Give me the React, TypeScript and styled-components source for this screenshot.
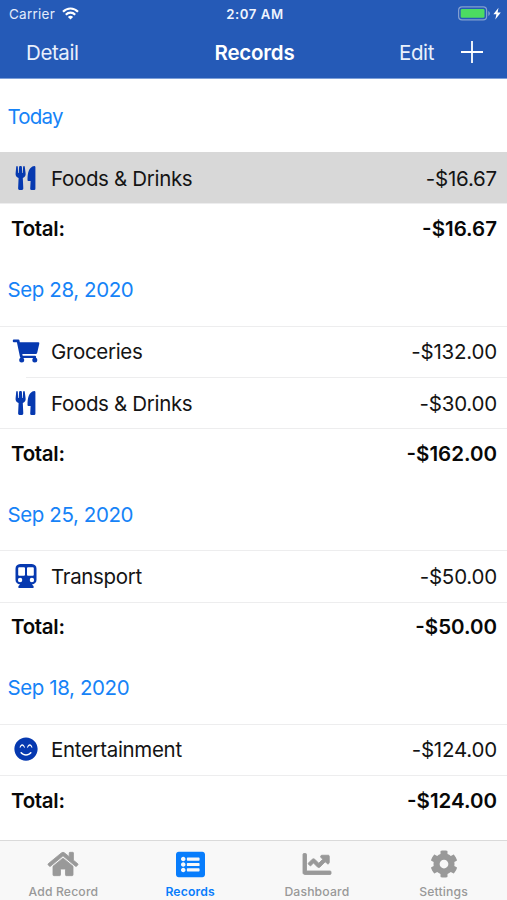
import React from "react";
import styled, { createGlobalStyle } from "styled-components";
import { FaSmileBeam, FaHome, FaListAlt, FaChartLine, FaCog } from "react-icons/fa";

const GlobalStyle = createGlobalStyle`
  * { box-sizing: border-box; }
  body {
    margin: 0;
    background: #fff;
    font-family: Inter, "Liberation Sans", sans-serif;
    font-size: 20.5px;
    color: #141414;
  }
`;

const Screen = styled.div`
  width: 507px;
  height: 900px;
  display: flex;
  flex-direction: column;
  overflow: hidden;
  background: #fff;
`;

const Header = styled.header`
  height: 79px;
  flex: none;
  background: #255ab7;
  border-bottom: 1px solid #7d9fd8;
  color: #fff;
`;

const StatusBar = styled.div`
  height: 27px;
  display: grid;
  grid-template-columns: 1fr auto 1fr;
  align-items: center;
  padding: 0 6px 0 9px;
  font-size: 13.5px;
`;

const Carrier = styled.div`
  display: flex;
  align-items: center;
  gap: 7px;
  color: #e3ecfb;
  letter-spacing: 0.25px;
`;

const Clock = styled.div`
  font-weight: 600;
  font-size: 13.5px;
  letter-spacing: 0.55px;
  font-size: 13.2px;
  color: #eef4fe;
`;

const Power = styled.div`
  display: flex;
  justify-content: flex-end;
`;

const NavBar = styled.nav`
  height: 51px;
  display: grid;
  grid-template-columns: 1fr auto 1fr;
  align-items: center;
  padding: 0 24px 0 26px;
`;

const NavLink = styled.span`
  color: #e9f0fc;
  letter-spacing: -0.4px;
`;

const Title = styled.h1`
  margin: 0;
  font-size: 20.5px;
  font-weight: 600;
  letter-spacing: -0.2px;
`;

const Actions = styled.div`
  display: flex;
  align-items: center;
  justify-content: flex-end;
  gap: 27px;
  svg { margin-top: -2px; }
`;

const List = styled.main`
  flex: 1;
  min-height: 0;
  padding-top: 2px;
`;

const DateHeading = styled.h2<{ $tight?: boolean }>`
  margin: 0;
  height: 71.2px;
  padding: 0 0 1px 7.5px;
  display: flex;
  align-items: center;
  font-size: 20.5px;
  font-weight: 400;
  letter-spacing: ${(p) => (p.$tight ? "-0.8px" : "-0.4px")};
  color: #1683f7;
`;

const Records = styled.div`
  border-top: 1px solid #ededee;
  border-bottom: 1px solid #ededee;
  margin-bottom: -1px;
`;

const Row = styled.div<{ $selected?: boolean }>`
  height: 51.25px;
  display: grid;
  grid-template-columns: 51px 1fr auto;
  align-items: center;
  padding: 1px 10px 0 0;
  margin-top: -1px;
  background: ${(p) => (p.$selected ? "#d8d8d8" : "transparent")};

  & + & {
    margin-top: 0;
    background: linear-gradient(#ededee, #ededee) 26px 0 / 100% 1px no-repeat;
  }
`;

const IconCell = styled.span`
  display: flex;
  justify-content: center;
  color: #0639b0;
  svg { display: block; margin-top: -1px; }
`;

const Name = styled.span`
  letter-spacing: -0.33px;
`;

const Amount = styled.span`
  letter-spacing: -0.2px;
`;

const Total = styled.div`
  height: 51px;
  display: flex;
  align-items: center;
  justify-content: space-between;
  padding: 0 10px 0.4px 11px;
  font-weight: 600;
  color: #080808;
`;

const TotalLabel = styled.span`
  letter-spacing: -0.3px;
`;

const TabBar = styled.footer`
  height: 60px;
  flex: none;
  display: grid;
  grid-template-columns: repeat(4, 1fr);
  background: #f8f8f8;
  border-top: 1px solid #dadada;
`;

const Tab = styled.div<{ $active?: boolean }>`
  display: flex;
  flex-direction: column;
  align-items: center;
  color: ${(p) => (p.$active ? "#087dfc" : "#999")};
  font-size: 12.2px;
  font-weight: ${(p) => (p.$active ? 600 : 500)};
  letter-spacing: 0.15px;
  padding-top: 8px;
`;

const TabIcon = styled.span<{ $bold?: boolean }>`
  height: 30px;
  display: flex;
  align-items: center;
  svg {
    overflow: visible;
    stroke-width: ${(p) => (p.$bold ? 16 : 0)};
  }
`;

const TabLabel = styled.span`
  line-height: 15px;
  margin-top: 5px;
`;

const WifiIcon = () => (
  <svg width="17" height="13" viewBox="0 0 17 13" fill="none" stroke="#fff" strokeWidth="2.1">
    <path d="M1 4.8C5.2 .3 11.8 .3 16 4.8" />
    <path d="M3.8 7.7c2.7-2.8 6.7-2.8 9.4 0" />
    <path d="M8.5 12.5 5.9 9.9c1.5-1.5 3.7-1.5 5.2 0Z" fill="#fff" stroke="none" />
  </svg>
);

const BatteryIcon = () => (
  <svg width="43" height="15" viewBox="0 0 43 15">
    <rect x=".6" y=".9" width="28" height="13" rx="3.4" fill="none" stroke="#839fd0" strokeWidth="1.2" />
    <rect x="2.7" y="3" width="23.8" height="8.8" rx="1.4" fill="#4cdb61" />
    <path d="M30.3 5v5q1.6-.6 1.6-2.5T30.3 5Z" fill="#839fd0" />
    <path d="M40.5 1.7 35.4 8.2h3l-1.1 5.2 5.5-6.9h-3.2Z" fill="#fff" />
  </svg>
);

const PlusIcon = () => (
  <svg width="22" height="22" viewBox="0 0 22 22" stroke="#fff" strokeWidth="1.8">
    <path d="M11 0v22M0 11h22" />
  </svg>
);

const UtensilsIcon = () => (
  <svg width="21" height="24" viewBox="0 0 21 24" fill="currentColor">
    <path d="M1.2.9Q1.3 0 2 0t.8.9L3.1 7h.6L4.1.9Q4.2 0 5 0H6q.8 0 .9.9L7.2 7h.6L8.1.9Q8.2 0 9 0t.8.9l.8 6.3c.3 2.6-.8 3.9-2.8 4.9l.5 10.5q0 1.4-1.3 1.4H4.4q-1.3 0-1.3-1.4l.5-10.5C1.4 11.1.3 9.8.6 7.2Z" />
    <path d="M20.4 1v21.7q0 1.3-1.3 1.3h-2.6q-1.3 0-1.3-1.3l.4-7.6h-2.2q-1-.2-.9-1.3C12.6 7.2 13.6 1 19.3 0q1.1 0 1.1 1Z" />
  </svg>
);

const CartIcon = () => (
  <svg width="28" height="24" viewBox="0 0 28 24" fill="currentColor">
    <path d="M1.8.5h4.5q1 0 1.2 1l.3 1.8h18.4q1.4 0 1.1 1.4l-2.1 9q-.3 1.2-1.5 1.2H10.3l.4 1.9h12.4q1.3.2 1 1.5l-.2.8H9.2q-1 0-1.2-1L4.9 3.2H1.8Q.8 3.2.8 2.3v-.8q0-1 1-1Z" />
    <circle cx="9.7" cy="21.1" r="2.5" />
    <circle cx="22.8" cy="21.1" r="2.5" />
  </svg>
);

const SubwayIcon = () => (
  <svg width="22" height="24" viewBox="0 0 22 24" fill="currentColor">
    <path
      fillRule="evenodd"
      d="M5.2 0h11.6Q21.5.6 21.5 4.7v11.2c0 2.5-2 4.2-4.6 4.6l1.6 1.6q.8 1.9-.5 1.9H4q-1.3 0-.5-1.9l1.6-1.6C2.5 20.1.5 18.4.5 15.9V4.7Q.5.6 5.2 0ZM4.2 3.2q-1 0-1 1v6.6q0 1 1 1h4.8q1 0 1-1V4.2q0-1-1-1Zm8.8 0q-1 0-1 1v6.6q0 1 1 1h4.8q1 0 1-1V4.2q0-1-1-1ZM5.1 13.8a2.2 2.2 0 1 0 0 4.4 2.2 2.2 0 0 0 0-4.4Zm11.8 0a2.2 2.2 0 1 0 0 4.4 2.2 2.2 0 0 0 0-4.4Z"
    />
  </svg>
);

const SmileIcon = () => <FaSmileBeam size={24} />;

interface RecordItem {
  icon: React.ComponentType;
  name: string;
  amount: string;
  selected?: boolean;
}

interface DayGroup {
  date: string;
  items: RecordItem[];
  total: string;
}

const days: DayGroup[] = [
  {
    date: "Today",
    items: [{ icon: UtensilsIcon, name: "Foods & Drinks", amount: "-$16.67", selected: true }],
    total: "-$16.67",
  },
  {
    date: "Sep 28, 2020",
    items: [
      { icon: CartIcon, name: "Groceries", amount: "-$132.00" },
      { icon: UtensilsIcon, name: "Foods & Drinks", amount: "-$30.00" },
    ],
    total: "-$162.00",
  },
  {
    date: "Sep 25, 2020",
    items: [{ icon: SubwayIcon, name: "Transport", amount: "-$50.00" }],
    total: "-$50.00",
  },
  {
    date: "Sep 18, 2020",
    items: [{ icon: SmileIcon, name: "Entertainment", amount: "-$124.00" }],
    total: "-$124.00",
  },
];

const tabs = [
  { icon: FaHome, size: 30, label: "Add Record", bold: true },
  { icon: FaListAlt, size: 29, label: "Records", active: true },
  { icon: FaChartLine, size: 28, label: "Dashboard", bold: true },
  { icon: FaCog, size: 28, label: "Settings" },
];

export default function App() {
  return (
    <Screen>
      <GlobalStyle />
      <Header>
        <StatusBar>
          <Carrier>
            Carrier <WifiIcon />
          </Carrier>
          <Clock>2:07 AM</Clock>
          <Power>
            <BatteryIcon />
          </Power>
        </StatusBar>
        <NavBar>
          <NavLink>Detail</NavLink>
          <Title>Records</Title>
          <Actions>
            <NavLink>Edit</NavLink>
            <PlusIcon />
          </Actions>
        </NavBar>
      </Header>
      <List>
        {days.map((day) => (
          <section key={day.date}>
            <DateHeading $tight={day.date === "Today"}>{day.date}</DateHeading>
            <Records>
              {day.items.map(({ icon: Icon, name, amount, selected }) => (
                <Row key={name} $selected={selected}>
                  <IconCell>
                    <Icon />
                  </IconCell>
                  <Name>{name}</Name>
                  <Amount>{amount}</Amount>
                </Row>
              ))}
            </Records>
            <Total>
              <TotalLabel>Total:</TotalLabel>
              <span>{day.total}</span>
            </Total>
          </section>
        ))}
      </List>
      <TabBar>
        {tabs.map(({ icon: Icon, size, label, active, bold }) => (
          <Tab key={label} $active={active}>
            <TabIcon $bold={bold}>
              <Icon size={size} />
            </TabIcon>
            <TabLabel>{label}</TabLabel>
          </Tab>
        ))}
      </TabBar>
    </Screen>
  );
}
